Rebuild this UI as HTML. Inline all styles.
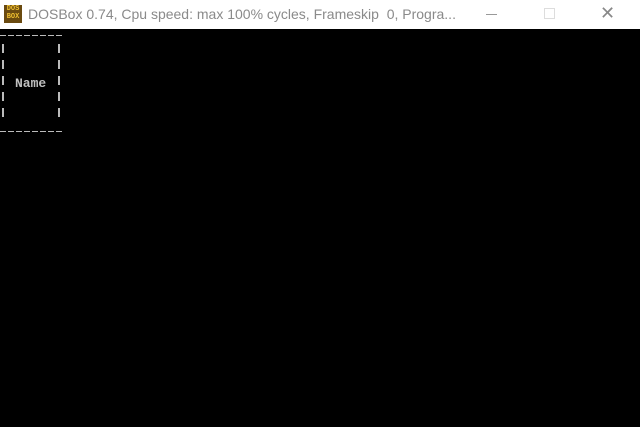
<html><head><style>
body{margin:0;width:640px;height:427px;background:#000;overflow:hidden;position:relative;font-family:"Liberation Sans",sans-serif}
.tb{position:absolute;left:0;top:0;width:640px;height:29px;background:#fff}
.t{position:absolute;left:28px;top:6px;font-size:14px;color:#8a8a8a;white-space:nowrap;font-family:"Liberation Sans",sans-serif}
.ic{position:absolute;left:4px;top:5px;width:18px;height:18px;background:#6a4a10;color:#f0c030;font:bold 7px/8px "Liberation Mono",monospace;text-align:center}
.d{position:absolute;left:0;width:62px;height:1px;background:repeating-linear-gradient(90deg,#bbb 0 6px,transparent 6px 8px)}
.v{position:absolute;top:44px;width:2px;height:78px;background:repeating-linear-gradient(#bbb 0 9px,transparent 9px 16px)}
.n{position:absolute;left:15px;top:76px;color:#c0c0c0;font:bold 13px "Liberation Mono",monospace}
</style></head><body>
<div class="tb"><div class="ic">DOS<br>BOX</div>
<div class="t">DOSBox 0.74, Cpu speed: max 100% cycles, Frameskip &nbsp;0, Progra...</div>
<div style="position:absolute;left:486px;top:14px;width:11px;height:1px;background:#999"></div>
<div style="position:absolute;left:544px;top:8px;width:9px;height:9px;border:1px solid #ddd"></div>
<div style="position:absolute;left:600px;top:3px;color:#888;font-size:18px">✕</div>
</div>
<div class="d" style="top:35px"></div>
<div class="d" style="top:131px"></div>
<div class="v" style="left:2px"></div>
<div class="v" style="left:58px"></div>
<div class="n">Name</div>
</body></html>
